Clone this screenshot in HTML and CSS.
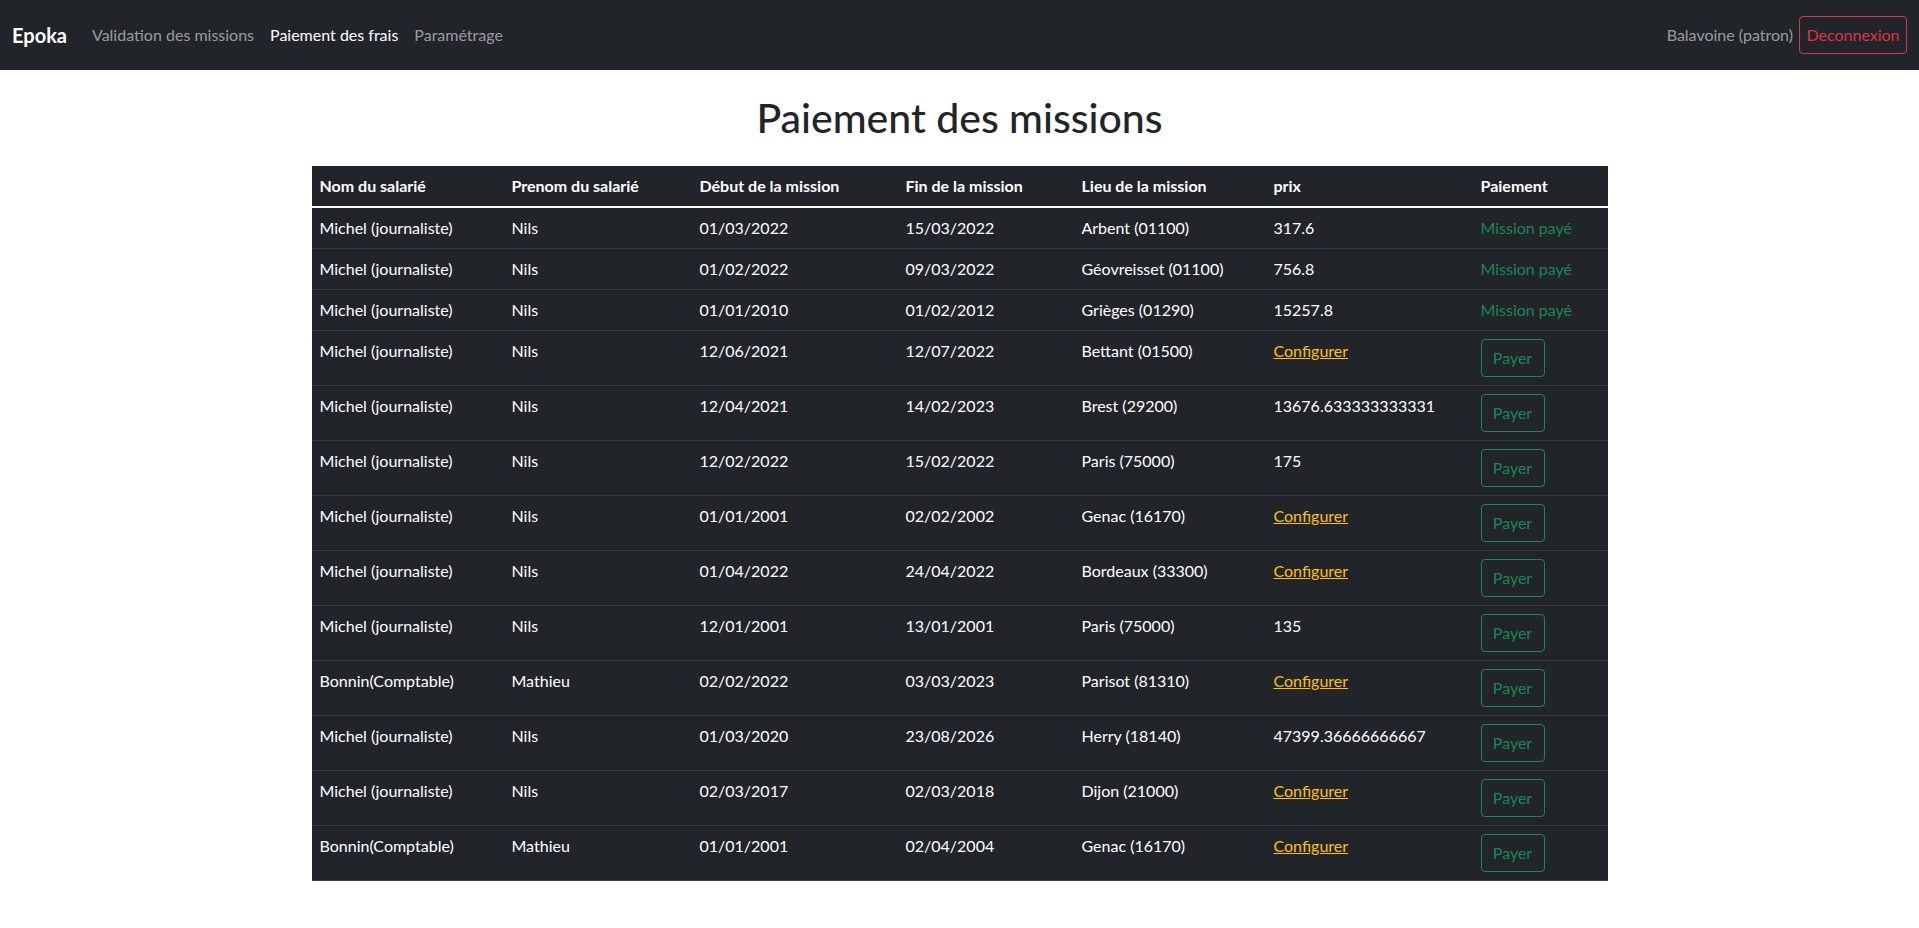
FILE: index.html
```html
<!DOCTYPE html>
<html lang="fr">
<head>
<meta charset="utf-8">
<title>Epoka - Paiement des missions</title>
<link rel="stylesheet" href="styles.css">
</head>
<body>
<nav class="navbar">
  <div class="nav-left">
    <a class="brand" href="#">Epoka</a>
    <ul class="nav-links">
      <li><a class="nav-link" href="#">Validation des missions</a></li>
      <li><a class="nav-link active" href="#">Paiement des frais</a></li>
      <li><a class="nav-link" href="#">Paramétrage</a></li>
    </ul>
  </div>
  <div class="nav-right">
    <span class="nav-user">Balavoine (patron)</span>
    <a class="btn btn-danger-outline" href="#">Deconnexion</a>
  </div>
</nav>

<main class="container">
  <h1 class="title">Paiement des missions</h1>
  <table class="table">
    <colgroup>
      <col class="c1"><col class="c2"><col class="c3"><col class="c4"><col class="c5"><col class="c6"><col class="c7">
    </colgroup>
    <thead>
      <tr>
        <th>Nom du salarié</th>
        <th>Prenom du salarié</th>
        <th>Début de la mission</th>
        <th>Fin de la mission</th>
        <th>Lieu de la mission</th>
        <th>prix</th>
        <th>Paiement</th>
      </tr>
    </thead>
    <tbody>
      <tr><td>Michel (journaliste)</td><td>Nils</td><td>01/03/2022</td><td>15/03/2022</td><td>Arbent (01100)</td><td>317.6</td><td><span class="paid">Mission payé</span></td></tr>
      <tr><td>Michel (journaliste)</td><td>Nils</td><td>01/02/2022</td><td>09/03/2022</td><td>Géovreisset (01100)</td><td>756.8</td><td><span class="paid">Mission payé</span></td></tr>
      <tr><td>Michel (journaliste)</td><td>Nils</td><td>01/01/2010</td><td>01/02/2012</td><td>Grièges (01290)</td><td>15257.8</td><td><span class="paid">Mission payé</span></td></tr>
      <tr><td>Michel (journaliste)</td><td>Nils</td><td>12/06/2021</td><td>12/07/2022</td><td>Bettant (01500)</td><td><a class="config" href="#">Configurer</a></td><td><button class="btn btn-success-outline">Payer</button></td></tr>
      <tr><td>Michel (journaliste)</td><td>Nils</td><td>12/04/2021</td><td>14/02/2023</td><td>Brest (29200)</td><td>13676.633333333331</td><td><button class="btn btn-success-outline">Payer</button></td></tr>
      <tr><td>Michel (journaliste)</td><td>Nils</td><td>12/02/2022</td><td>15/02/2022</td><td>Paris (75000)</td><td>175</td><td><button class="btn btn-success-outline">Payer</button></td></tr>
      <tr><td>Michel (journaliste)</td><td>Nils</td><td>01/01/2001</td><td>02/02/2002</td><td>Genac (16170)</td><td><a class="config" href="#">Configurer</a></td><td><button class="btn btn-success-outline">Payer</button></td></tr>
      <tr><td>Michel (journaliste)</td><td>Nils</td><td>01/04/2022</td><td>24/04/2022</td><td>Bordeaux (33300)</td><td><a class="config" href="#">Configurer</a></td><td><button class="btn btn-success-outline">Payer</button></td></tr>
      <tr><td>Michel (journaliste)</td><td>Nils</td><td>12/01/2001</td><td>13/01/2001</td><td>Paris (75000)</td><td>135</td><td><button class="btn btn-success-outline">Payer</button></td></tr>
      <tr><td>Bonnin(Comptable)</td><td>Mathieu</td><td>02/02/2022</td><td>03/03/2023</td><td>Parisot (81310)</td><td><a class="config" href="#">Configurer</a></td><td><button class="btn btn-success-outline">Payer</button></td></tr>
      <tr><td>Michel (journaliste)</td><td>Nils</td><td>01/03/2020</td><td>23/08/2026</td><td>Herry (18140)</td><td>47399.36666666667</td><td><button class="btn btn-success-outline">Payer</button></td></tr>
      <tr><td>Michel (journaliste)</td><td>Nils</td><td>02/03/2017</td><td>02/03/2018</td><td>Dijon (21000)</td><td><a class="config" href="#">Configurer</a></td><td><button class="btn btn-success-outline">Payer</button></td></tr>
      <tr><td>Bonnin(Comptable)</td><td>Mathieu</td><td>01/01/2001</td><td>02/04/2004</td><td>Genac (16170)</td><td><a class="config" href="#">Configurer</a></td><td><button class="btn btn-success-outline">Payer</button></td></tr>
    </tbody>
  </table>
</main>
</body>
</html>
```

FILE: styles.css
```css
* { box-sizing: border-box; }

html, body {
  margin: 0;
  padding: 0;
}

body {
  font-family: Lato, "Noto Sans", "Liberation Sans", sans-serif;
  font-size: 16px;
  line-height: 1.5;
  color: #212529;
  background: #fff;
}

a { text-decoration: none; }

.navbar {
  background: #212529;
  height: 70px;
  padding: 16px 12px;
  display: flex;
  align-items: center;
  justify-content: space-between;
}

.nav-left {
  display: flex;
  align-items: center;
}

.brand {
  color: #fff;
  font-size: 20px;
  font-weight: 700;
  line-height: 30px;
  margin-right: 17px;
}

.nav-links {
  display: flex;
  list-style: none;
  margin: 0;
  padding: 0;
}

.nav-link {
  display: block;
  padding: 8px;
  color: rgba(255, 255, 255, 0.55);
}

.nav-link.active { color: #fff; }

.nav-right {
  display: flex;
  align-items: center;
  gap: 6px;
}

.nav-user {
  color: rgba(255, 255, 255, 0.55);
}

.btn {
  display: inline-block;
  height: 38px;
  padding: 6px 12px;
  font-family: inherit;
  font-size: 16px;
  line-height: 24px;
  border-radius: 4px;
  background: transparent;
  text-align: center;
  cursor: pointer;
}

.btn-danger-outline {
  color: #dc3545;
  border: 1px solid #dc3545;
  width: 108px;
  padding: 6px 0;
}

.btn-success-outline {
  color: #198754;
  border: 1px solid #198754;
  width: 64px;
  padding: 6px 0;
}

.container {
  width: 1296px;
  margin: 0 auto;
}

.title {
  margin: 24px 0;
  font-size: 41px;
  font-weight: 500;
  line-height: 48px;
  text-align: center;
}

.table {
  width: 100%;
  table-layout: fixed;
  border-collapse: collapse;
  background: #212529;
  color: #fff;
}

.c1 { width: 192px; }
.c2 { width: 188px; }
.c3 { width: 206px; }
.c4 { width: 176px; }
.c5 { width: 192px; }
.c6 { width: 207px; }
.c7 { width: 135px; }

.table th,
.table td {
  padding: 8px;
  text-align: left;
  vertical-align: top;
  border-bottom: 1px solid #373b3e;
  white-space: nowrap;
}

.table th {
  font-weight: 700;
  border-bottom: 2px solid #fff;
}

.paid { color: #198754; }

.config {
  color: #ffc107;
  text-decoration: underline;
}
```
